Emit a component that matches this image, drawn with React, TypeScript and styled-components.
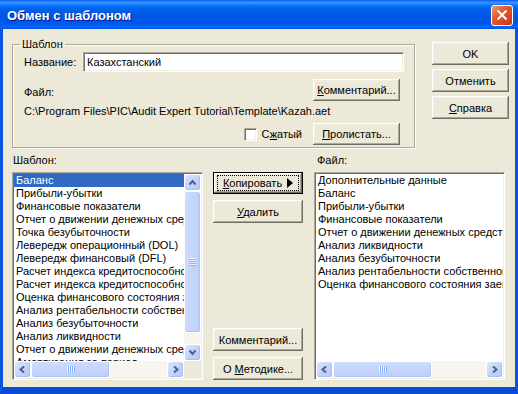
import styled, { createGlobalStyle } from "styled-components";

const GlobalStyle = createGlobalStyle`
    html, body {
        margin: 0;
        padding: 0;
        background: #ffffff;
    }
    body {
        font-family: "Liberation Sans", Arial, sans-serif;
        font-size: 11px;
        color: #000000;
    }
`;

const templateItems = [
    "Баланс",
    "Прибыли-убытки",
    "Финансовые показатели",
    "Отчет о движении денежных средств",
    "Точка безубыточности",
    "Левередж операционный (DOL)",
    "Левередж финансовый (DFL)",
    "Расчет индекса кредитоспособности",
    "Расчет индекса кредитоспособности",
    "Оценка финансового состояния заемщика",
    "Анализ рентабельности собственного капитала",
    "Анализ безубыточности",
    "Анализ ликвидности",
    "Отчет о движении денежных средств",
    "Амортизация за период",
];

const fileItems = [
    "Дополнительные данные",
    "Баланс",
    "Прибыли-убытки",
    "Финансовые показатели",
    "Отчет о движении денежных средств",
    "Анализ ликвидности",
    "Анализ безубыточности",
    "Анализ рентабельности собственного капитала",
    "Оценка финансового состояния заемщика",
];

const Chevron = ({ dir }: { dir: "up" | "down" | "left" | "right" }) => {
    const points = {
        up: "4.5,9.5 7.5,6 10.5,9.5",
        down: "4.5,5.5 7.5,9 10.5,5.5",
        left: "9,4.5 5.5,7.5 9,10.5",
        right: "6,4.5 9.5,7.5 6,10.5",
    }[dir];
    return (
        <svg width="15" height="15" viewBox="0 0 15 15">
            <polyline points={points} fill="none" stroke="#4D6185" strokeWidth="2" />
        </svg>
    );
};

export default function App() {
    return (
        <>
            <GlobalStyle />
            <Window>
                <TitleBar>
                    <Title>Обмен с шаблоном</Title>
                    <CloseButton>
                        <svg width="20" height="19" viewBox="0 0 20 19">
                            <path d="M5.5 4.5 L14.5 13.5 M14.5 4.5 L5.5 13.5" stroke="#ffffff" strokeWidth="2" />
                        </svg>
                    </CloseButton>
                </TitleBar>
                <Body>
                    <TopSection>
                        <GroupBox>
                            <Legend>Шаблон</Legend>
                            <NameRow>
                                <FieldLabel>Название:</FieldLabel>
                                <TextInput>Казахстанский</TextInput>
                            </NameRow>
                            <FileRow>
                                <FileLabel>Файл:</FileLabel>
                                <Button $w={87} $h={22}>
                                    <span>
                                        <U>К</U>омментарий...
                                    </span>
                                </Button>
                            </FileRow>
                            <PathText>C:\Program Files\PIC\Audit Expert Tutorial\Template\Kazah.aet</PathText>
                            <BrowseRow>
                                <Checkbox />
                                <CheckLabel>
                                    С<U>ж</U>атый
                                </CheckLabel>
                                <Button $w={87} $h={22}>
                                    <span>
                                        <U>П</U>ролистать...
                                    </span>
                                </Button>
                            </BrowseRow>
                        </GroupBox>
                        <DialogButtons>
                            <Button>OK</Button>
                            <Button>Отменить</Button>
                            <Button>
                                <span>
                                    <U>С</U>правка
                                </span>
                            </Button>
                        </DialogButtons>
                    </TopSection>
                    <BottomSection>
                        <ListCaption $indent={1}>Шаблон:</ListCaption>
                        <span />
                        <ListCaption $indent={3}>Файл:</ListCaption>

                        <ListBox $withVScroll>
                            <Items>
                                {templateItems.map((item, i) => (
                                    <Item key={i} $selected={i === 0}>
                                        {item}
                                    </Item>
                                ))}
                            </Items>
                            <VScroll>
                                <ArrowButton>
                                    <Chevron dir="up" />
                                </ArrowButton>
                                <Track $vertical>
                                    <Thumb $vertical $size={142}>
                                        <Grip $vertical />
                                    </Thumb>
                                </Track>
                                <ArrowButton>
                                    <Chevron dir="down" />
                                </ArrowButton>
                            </VScroll>
                            <HScroll>
                                <ArrowButton>
                                    <Chevron dir="left" />
                                </ArrowButton>
                                <Track>
                                    <Thumb $size={79}>
                                        <Grip />
                                    </Thumb>
                                </Track>
                                <ArrowButton>
                                    <Chevron dir="right" />
                                </ArrowButton>
                            </HScroll>
                            <Corner />
                        </ListBox>

                        <MiddleColumn>
                            <ButtonStack>
                                <Button $w={90} $h={22} $default>
                                    <span>
                                        <U>К</U>опировать
                                    </span>
                                    <Arrow />
                                </Button>
                                <Button $w={90}>
                                    <span>
                                        <U>У</U>далить
                                    </span>
                                </Button>
                            </ButtonStack>
                            <ButtonStack>
                                <Button $w={90}>Комментарий...</Button>
                                <Button $w={90}>
                                    <span>
                                        О <U>М</U>етодике...
                                    </span>
                                </Button>
                            </ButtonStack>
                        </MiddleColumn>

                        <ListBox>
                            <Items>
                                {fileItems.map((item, i) => (
                                    <Item key={i}>{item}</Item>
                                ))}
                            </Items>
                            <HScroll>
                                <ArrowButton>
                                    <Chevron dir="left" />
                                </ArrowButton>
                                <Track>
                                    <Thumb $size={99}>
                                        <Grip />
                                    </Thumb>
                                </Track>
                                <ArrowButton>
                                    <Chevron dir="right" />
                                </ArrowButton>
                            </HScroll>
                        </ListBox>
                    </BottomSection>
                </Body>
            </Window>
        </>
    );
}

const Window = styled.div`
    width: 518px;
    height: 394px;
    display: flex;
    flex-direction: column;
    overflow: hidden;
`;

const TitleBar = styled.div`
    box-sizing: border-box;
    height: 29px;
    flex-shrink: 0;
    padding: 0 5px 0 7px;
    display: flex;
    align-items: center;
    justify-content: space-between;
    background: linear-gradient(
        to bottom,
        #0058ee 0%,
        #3a93ff 8%,
        #288eff 12%,
        #127dff 16%,
        #036ffc 22%,
        #0262ee 28%,
        #0057e5 56%,
        #0054e3 66%,
        #0055eb 76%,
        #005bf5 86%,
        #026afe 92%,
        #0062ef 95%,
        #0052d6 100%
    );
`;

const Title = styled.div`
    font-family: "Liberation Sans", Arial, sans-serif;
    font-size: 13px;
    font-weight: bold;
    color: #ffffff;
    text-shadow: 1px 1px #0a1883;
    margin-top: 1px;
`;

const CloseButton = styled.div`
    box-sizing: border-box;
    width: 22px;
    height: 21px;
    margin-top: 2px;
    display: flex;
    align-items: center;
    justify-content: center;
    border: 1px solid #ffffff;
    border-radius: 3px;
    background: linear-gradient(135deg, #f09a7a 0%, #e35d34 35%, #d9481f 70%, #c63a12 100%);
`;

const Body = styled.div`
    flex: 1;
    display: flex;
    flex-direction: column;
    padding: 9px 6px 7px 9px;
    background: #ece9d8;
    border-left: 3px solid #0b54e0;
    border-right: 3px solid #0b54e0;
    border-bottom: 7px solid #0a4bd6;
    min-height: 0;
`;

const TopSection = styled.div`
    display: flex;
    align-items: flex-start;
    gap: 17px;
`;

const GroupBox = styled.fieldset`
    box-sizing: border-box;
    width: 403px;
    margin: 0;
    padding: 0 10px 2px 11px;
    border: 1px solid #aca899;
    box-shadow: 1px 1px 0 #ffffff, inset 1px 1px 0 #ffffff;
    min-width: 0;
`;

const Legend = styled.legend`
    margin-left: -4px;
    padding: 0 2px;
    line-height: 13px;
`;

const NameRow = styled.div`
    margin-top: 1px;
    display: flex;
    align-items: center;
`;

const FieldLabel = styled.span`
    width: 59px;
    flex-shrink: 0;
    line-height: 13px;
`;

const sunken = `
    border-top: 1px solid #aca899;
    border-left: 1px solid #aca899;
    border-bottom: 1px solid #ffffff;
    border-right: 1px solid #ffffff;
    box-shadow: inset 1px 1px 0 #716f64, inset -1px -1px 0 #f1efe2;
    background: #ffffff;
`;

const TextInput = styled.div`
    box-sizing: border-box;
    flex: 1;
    height: 20px;
    padding: 0 3px;
    line-height: 18px;
    ${sunken}
`;

const FileRow = styled.div`
    margin-top: 7px;
    display: flex;
    align-items: flex-end;
    justify-content: space-between;
    padding-right: 4px;
`;

const FileLabel = styled.span`
    line-height: 13px;
    margin-bottom: 2px;
`;

const PathText = styled.div`
    margin-top: 4px;
    line-height: 13px;
    white-space: nowrap;
`;

const BrowseRow = styled.div`
    margin-top: 5px;
    display: flex;
    align-items: center;
    justify-content: flex-end;
    padding-right: 4px;
`;

const Checkbox = styled.span`
    box-sizing: border-box;
    width: 13px;
    height: 13px;
    margin-right: 4px;
    ${sunken}
`;

const CheckLabel = styled.span`
    line-height: 13px;
    margin-right: 11px;
`;

const U = styled.span`
    text-decoration: underline;
    text-underline-offset: 1px;
`;

const DialogButtons = styled.div`
    margin-top: 4px;
    display: flex;
    flex-direction: column;
    gap: 4px;
`;

const Button = styled.button<{ $w?: number; $h?: number; $default?: boolean }>`
    box-sizing: border-box;
    position: relative;
    flex-shrink: 0;
    width: ${(p) => p.$w ?? 77}px;
    height: ${(p) => p.$h ?? 23}px;
    margin: 0;
    padding: 0;
    display: flex;
    align-items: center;
    justify-content: center;
    white-space: pre;
    font-family: "Liberation Sans", Arial, sans-serif;
    font-size: 11px;
    color: #000000;
    background: #ece9d8;
    border: ${(p) => (p.$default ? "1px solid #000000" : "none")};
    box-shadow: inset -1px -1px 0 #716f64, inset 1px 1px 0 #ffffff, inset -2px -2px 0 #aca899,
        inset 2px 2px 0 #f1efe2;

    ${(p) =>
        p.$default &&
        `
        &::after {
            content: "";
            position: absolute;
            inset: 2px 3px;
            border: 1px dotted #000000;
        }
    `}
`;

const Arrow = styled.span`
    width: 0;
    height: 0;
    margin-left: 5px;
    border-left: 6px solid #000000;
    border-top: 5px solid transparent;
    border-bottom: 5px solid transparent;
`;

const BottomSection = styled.div`
    flex: 1;
    margin-top: 6px;
    display: grid;
    grid-template-columns: 191px 91px 191px;
    grid-template-rows: 13px 1fr;
    column-gap: 10px;
    row-gap: 5px;
    min-height: 0;
`;

const ListCaption = styled.div<{ $indent: number }>`
    line-height: 13px;
    padding-left: ${(p) => p.$indent}px;
`;

const ListBox = styled.div<{ $withVScroll?: boolean }>`
    box-sizing: border-box;
    padding: 1px;
    display: grid;
    grid-template-columns: ${(p) => (p.$withVScroll ? "1fr 17px" : "1fr")};
    grid-template-rows: 1fr 17px;
    overflow: hidden;
    min-height: 0;
    ${sunken}
`;

const Items = styled.div`
    overflow: hidden;
    min-height: 0;
    min-width: 0;
    background: #ffffff;
`;

const Item = styled.div<{ $selected?: boolean }>`
    height: 13px;
    line-height: 13px;
    padding-left: 2px;
    white-space: nowrap;
    overflow: hidden;
    color: ${(p) => (p.$selected ? "#ffffff" : "#000000")};
    background: ${(p) => (p.$selected ? "#316ac5" : "transparent")};
`;

const VScroll = styled.div`
    display: flex;
    flex-direction: column;
    min-height: 0;
`;

const HScroll = styled.div`
    display: flex;
    min-width: 0;
`;

const Corner = styled.div`
    background: #ece9d8;
`;

const ArrowButton = styled.div`
    box-sizing: border-box;
    width: 17px;
    height: 17px;
    flex-shrink: 0;
    display: flex;
    align-items: center;
    justify-content: center;
    border: 1px solid #ffffff;
    border-radius: 3px;
    background: linear-gradient(135deg, #dce7fe 0%, #c3d4fc 50%, #b3c8f6 100%);
    box-shadow: inset -1px -1px 0 #a9bff0;
`;

const Track = styled.div<{ $vertical?: boolean }>`
    flex: 1;
    display: flex;
    flex-direction: ${(p) => (p.$vertical ? "column" : "row")};
    background: #f6f5ef;
    min-width: 0;
    min-height: 0;
`;

const Thumb = styled.div<{ $vertical?: boolean; $size: number }>`
    box-sizing: border-box;
    flex-shrink: 0;
    ${(p) => (p.$vertical ? `height: ${p.$size}px;` : `width: ${p.$size}px;`)}
    display: flex;
    align-items: center;
    justify-content: center;
    border: 1px solid #ffffff;
    border-radius: 3px;
    background: ${(p) =>
        p.$vertical
            ? "linear-gradient(to right, #cddbfd, #bccffb)"
            : "linear-gradient(to bottom, #cddbfd, #bccffb)"};
    box-shadow: inset -1px -1px 0 #aec3f2;
`;

const Grip = styled.div<{ $vertical?: boolean }>`
    width: ${(p) => (p.$vertical ? "7px" : "8px")};
    height: ${(p) => (p.$vertical ? "8px" : "7px")};
    background: repeating-linear-gradient(
        ${(p) => (p.$vertical ? "to bottom" : "to right")},
        #eef4fe 0px,
        #eef4fe 1px,
        #8cb0f8 1px,
        #8cb0f8 2px
    );
`;

const MiddleColumn = styled.div`
    display: flex;
    flex-direction: column;
    justify-content: space-between;
`;

const ButtonStack = styled.div`
    display: flex;
    flex-direction: column;
    gap: 6px;
`;
